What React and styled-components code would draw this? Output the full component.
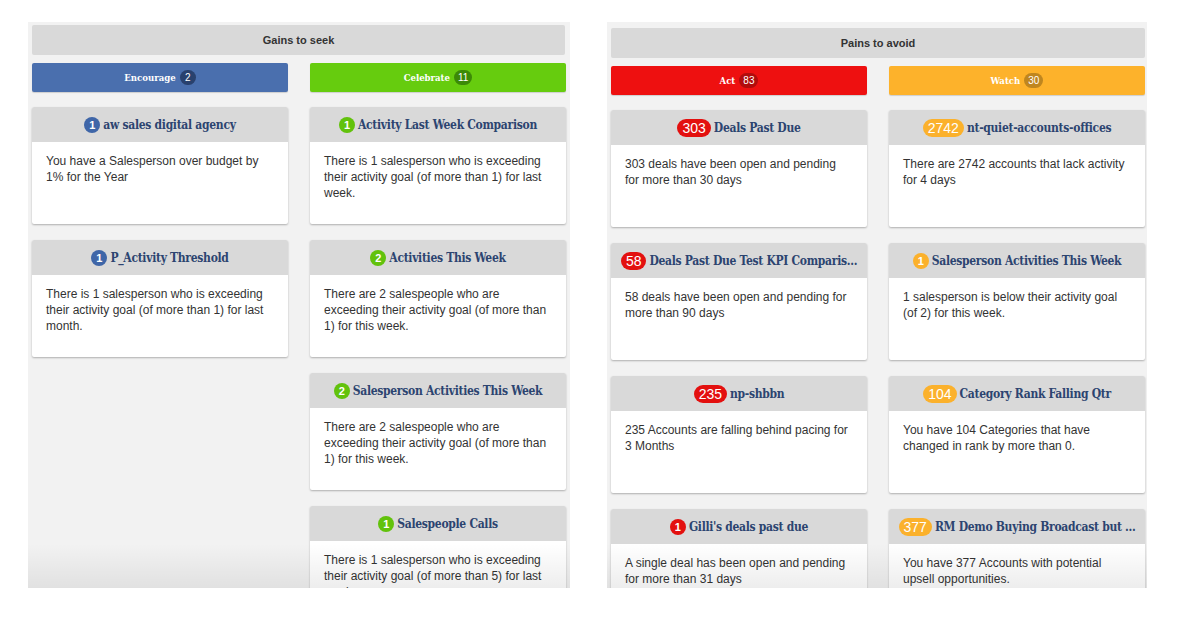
import React from "react";
import styled, { createGlobalStyle } from "styled-components";

const GlobalStyle = createGlobalStyle`
  html, body {
    margin: 0;
    padding: 0;
    background: #ffffff;
  }
  body {
    font-family: "Liberation Sans", Arial, sans-serif;
  }
`;

const Page = styled.div`
  display: flex;
  align-items: flex-start;
  gap: 37px;
  padding: 22px 0 0 28px;
  width: 1200px;
  height: 633px;
  box-sizing: border-box;
`;

const Panel = styled.section`
  position: relative;
  width: ${props => props.width}px;
  height: 566px;
  overflow: hidden;
  background: #f2f2f2;
  box-sizing: border-box;
  padding: ${props => props.padTop}px ${props => props.padRight}px 0 4px;

  &::after {
    content: "";
    position: absolute;
    left: 0;
    right: 0;
    bottom: 0;
    height: 44px;
    background: linear-gradient(rgba(0, 0, 0, 0), rgba(0, 0, 0, 0.07));
    pointer-events: none;
  }
`;

const PanelHeader = styled.div`
  height: 30px;
  display: flex;
  align-items: center;
  justify-content: center;
  background: #d9d9d9;
  border-radius: 2px;
  color: #333333;
  font-weight: bold;
  font-size: 11px;
`;

const Columns = styled.div`
  display: grid;
  grid-template-columns: 256px 256px;
  column-gap: 22px;
  margin-top: 8px;
`;

const Column = styled.div`
  display: flex;
  flex-direction: column;
`;

const CategoryBar = styled.div`
  height: 29px;
  display: flex;
  align-items: center;
  justify-content: center;
  gap: 4px;
  background: ${props => props.color};
  border-radius: 2px;
  box-shadow: 0 1px 1px rgba(0, 0, 0, 0.15);
  color: #ffffff;
  font-family: "DejaVu Serif", serif;
  font-stretch: condensed;
  font-weight: bold;
  font-size: 9.5px;
  margin-bottom: 15px;
`;

const BarCount = styled.span`
  display: inline-flex;
  align-items: center;
  justify-content: center;
  min-width: 8px;
  height: 15px;
  padding: 0 4px;
  border-radius: 8px;
  background: ${props => props.color};
  color: #ffffff;
  font-family: "Liberation Sans", Arial, sans-serif;
  font-weight: normal;
  font-size: 10px;
`;

const Card = styled.div`
  display: flex;
  flex-direction: column;
  height: 117px;
  margin-bottom: 16px;
  border-radius: 2px;
  overflow: hidden;
  background: #ffffff;
  box-shadow: 0 1px 2px rgba(0, 0, 0, 0.28);
`;

const CardHead = styled.div`
  height: 35px;
  flex-shrink: 0;
  display: flex;
  align-items: center;
  justify-content: center;
  gap: 3px;
  padding: 0 8px;
  background: #d9d9d9;
`;

const CardTitle = styled.span`
  color: #2c4470;
  font-family: "DejaVu Serif", serif;
  font-stretch: condensed;
  font-weight: bold;
  font-size: 12px;
  letter-spacing: -0.3px;
  white-space: nowrap;
`;

const Count = styled.span`
  display: inline-flex;
  align-items: center;
  justify-content: center;
  flex-shrink: 0;
  min-width: ${props => (props.wide ? 0 : 16)}px;
  height: ${props => (props.wide ? 18 : 16)}px;
  padding: 0 ${props => (props.wide ? 5 : 0)}px;
  box-sizing: border-box;
  border-radius: 9px;
  background: ${props => props.color};
  color: #ffffff;
  font-family: "Liberation Sans", Arial, sans-serif;
  font-weight: ${props => (props.wide ? "normal" : "bold")};
  font-size: ${props => (props.wide ? 14 : 11)}px;
`;

const CardBody = styled.p`
  margin: 0;
  padding: 11px 14px 0;
  color: #333333;
  font-size: 12px;
  line-height: 16px;
`;

const palette = {
  blue: { bar: "#4a6fae", badge: "#29416e", count: "#3f66a8" },
  green: { bar: "#66cc0e", badge: "#3c8a07", count: "#62c20c" },
  red: { bar: "#ee1010", badge: "#b10c0c", count: "#e3100f" },
  orange: { bar: "#fdb22b", badge: "#bf861f", count: "#fbb12c" }
};

const panels = [
  {
    title: "Gains to seek",
    width: 542,
    padTop: 3,
    padRight: 5,
    columns: [
      {
        label: "Encourage",
        total: 2,
        tone: "blue",
        cards: [
          { n: "1", title: "aw sales digital agency", text: "You have a Salesperson over budget by 1% for the Year" },
          {
            n: "1",
            title: "P_Activity Threshold",
            text: "There is 1 salesperson who is exceeding their activity goal (of more than 1) for last month."
          }
        ]
      },
      {
        label: "Celebrate",
        total: 11,
        tone: "green",
        cards: [
          {
            n: "1",
            title: "Activity Last Week Comparison",
            text: "There is 1 salesperson who is exceeding their activity goal (of more than 1) for last week."
          },
          {
            n: "2",
            title: "Activities This Week",
            text: "There are 2 salespeople who are exceeding their activity goal (of more than 1) for this week."
          },
          {
            n: "2",
            title: "Salesperson Activities This Week",
            text: "There are 2 salespeople who are exceeding their activity goal (of more than 1) for this week."
          },
          {
            n: "1",
            title: "Salespeople Calls",
            text: "There is 1 salesperson who is exceeding their activity goal (of more than 5) for last week."
          }
        ]
      }
    ]
  },
  {
    title: "Pains to avoid",
    width: 540,
    padTop: 6,
    padRight: 2,
    columns: [
      {
        label: "Act",
        total: 83,
        tone: "red",
        cards: [
          { n: "303", title: "Deals Past Due", text: "303 deals have been open and pending for more than 30 days" },
          {
            n: "58",
            title: "Deals Past Due Test KPI Comparis...",
            text: "58 deals have been open and pending for more than 90 days"
          },
          { n: "235", title: "np-shbbn", text: "235 Accounts are falling behind pacing for 3 Months" },
          {
            n: "1",
            title: "Gilli's deals past due",
            text: "A single deal has been open and pending for more than 31 days"
          }
        ]
      },
      {
        label: "Watch",
        total: 30,
        tone: "orange",
        cards: [
          { n: "2742", title: "nt-quiet-accounts-offices", text: "There are 2742 accounts that lack activity for 4 days" },
          {
            n: "1",
            title: "Salesperson Activities This Week",
            text: "1 salesperson is below their activity goal (of 2) for this week."
          },
          {
            n: "104",
            title: "Category Rank Falling Qtr",
            text: "You have 104 Categories that have changed in rank by more than 0."
          },
          {
            n: "377",
            title: "RM Demo Buying Broadcast but ...",
            text: "You have 377 Accounts with potential upsell opportunities."
          }
        ]
      }
    ]
  }
];

const AlertCard = ({ n, title, text, tone }) => (
  <Card>
    <CardHead>
      <Count color={palette[tone].count} wide={n.length > 1}>
        {n}
      </Count>
      <CardTitle>{title}</CardTitle>
    </CardHead>
    <CardBody>{text}</CardBody>
  </Card>
);

const App = () => (
  <>
    <GlobalStyle />
    <Page>
      {panels.map(panel => (
        <Panel key={panel.title} width={panel.width} padTop={panel.padTop} padRight={panel.padRight}>
          <PanelHeader>{panel.title}</PanelHeader>
          <Columns>
            {panel.columns.map(col => (
              <Column key={col.label}>
                <CategoryBar color={palette[col.tone].bar}>
                  {col.label}
                  <BarCount color={palette[col.tone].badge}>{col.total}</BarCount>
                </CategoryBar>
                {col.cards.map(card => (
                  <AlertCard key={card.title} tone={col.tone} {...card} />
                ))}
              </Column>
            ))}
          </Columns>
        </Panel>
      ))}
    </Page>
  </>
);

export default App;
